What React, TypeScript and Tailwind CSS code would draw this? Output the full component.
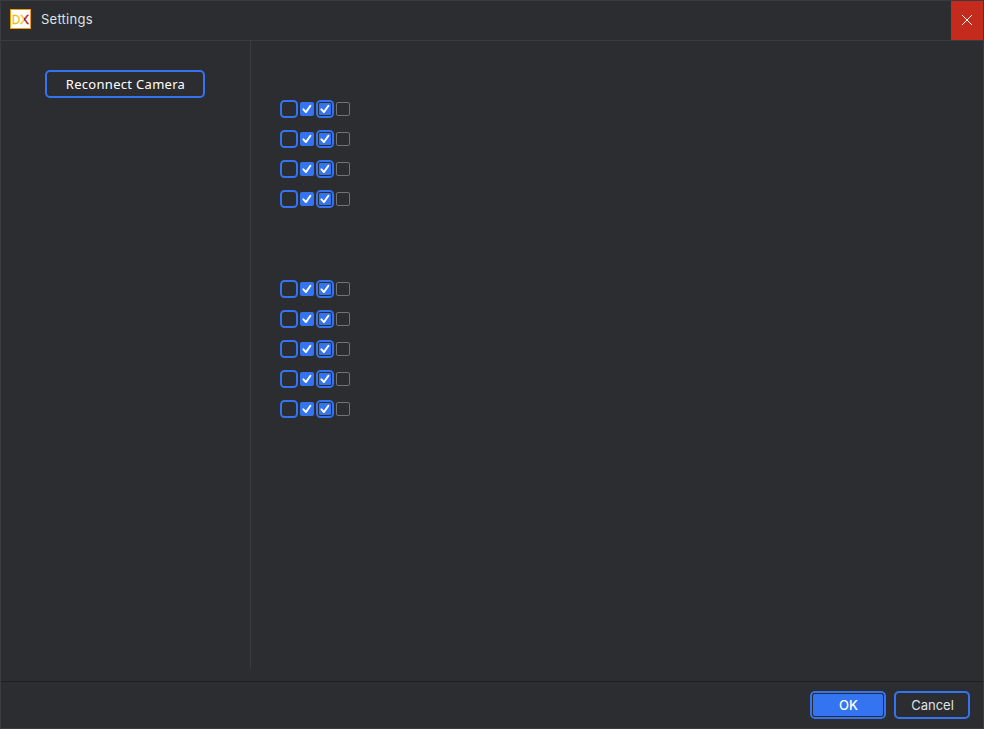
import React from "react";

function Tick() {
  return (
    <svg width="14" height="14" viewBox="0 0 14 14" fill="none" className="block">
      <path d="M3.4 7.3 5.9 10.1 10.4 3.7" stroke="#fff" strokeWidth="1.9" strokeLinecap="round" strokeLinejoin="round" />
    </svg>
  );
}

function CheckRow() {
  return (
    <div className="flex h-[18px] items-center gap-[2px]">
      <span className="size-[18px] rounded-[4.5px] border-2 border-[#3574f0]" />
      <span className="size-[14px] rounded-[2px] bg-[#3574f0]">
        <Tick />
      </span>
      <span className="size-[18px] rounded-[4.5px] border-2 border-[#3574f0] bg-[#2b2d30]">
        <span className="relative block size-[14px] rounded-[2px] border border-[#2b2d30] bg-[#3574f0]">
          <span className="absolute -top-px -left-px">
            <Tick />
          </span>
        </span>
      </span>
      <span className="size-[14px] rounded-[2px] border border-[#6f737a]" />
    </div>
  );
}

function CheckGroup({ rows }: { rows: number }) {
  return (
    <div className="flex flex-col gap-3">
      {Array.from({ length: rows }, (_, i) => (
        <CheckRow key={i} />
      ))}
    </div>
  );
}

function Logo() {
  return (
    <svg width="21" height="20" viewBox="0 0 21 20" className="block">
      <defs>
        <linearGradient id="cross" x1="0" x2="1" y1="0" y2="0">
          <stop offset="0.42" stopColor="#f0c018" />
          <stop offset="0.42" stopColor="#b5121b" />
        </linearGradient>
      </defs>
      <rect x="0.5" y="0.5" width="20" height="19" fill="#fff" stroke="#f59a0c" />
      <g fontFamily="'Open Sans', sans-serif" fontSize="12.5" strokeWidth="0.3">
        <text x="1.7" y="14.7" textLength="8.6" lengthAdjust="spacingAndGlyphs" fill="#eebc14" stroke="#eebc14">D</text>
        <text x="10.2" y="14.7" textLength="8.6" lengthAdjust="spacingAndGlyphs" fill="url(#cross)" stroke="url(#cross)">X</text>
      </g>
    </svg>
  );
}

export default function App() {
  return (
    <div className="flex h-[729px] w-[984px] flex-col border border-[#393b40] bg-[#2b2d30] font-['Inter',sans-serif] text-[13px] text-[#dfe1e5]">
      <header className="flex h-10 shrink-0 border-b border-[#393b40]">
        <div className="flex flex-1 items-start pt-2 pl-[9px]">
          <Logo />
          <h1 className="ml-[10px] leading-5 tracking-[0.25px]">Settings</h1>
        </div>
        <button className="flex w-8 items-center justify-center bg-[#c42b1c] pb-px">
          <svg width="12" height="12" viewBox="0 0 12 12" stroke="#fff" strokeWidth="1">
            <path d="M1 1 11 11M11 1 1 11" />
          </svg>
        </button>
      </header>
      <main className="flex h-[641px] shrink-0 border-b border-[#1e1f22]">
        <aside className="h-[628px] w-[250px] border-r border-[#393b40] pt-[29px] pl-11">
          <button className="flex h-7 w-40 items-center justify-center rounded-[5px] border-2 border-[#3574f0] pt-px pl-px font-['Noto_Sans',sans-serif] text-[13px] tracking-[0.3px] text-white">
            Reconnect Camera
          </button>
        </aside>
        <section className="flex flex-col gap-[72px] pt-[59px] pl-[29px]">
          <CheckGroup rows={4} />
          <CheckGroup rows={5} />
        </section>
      </main>
      <footer className="flex flex-1 items-start justify-end gap-2 pt-[9px] pr-[13px]">
        <button className="h-7 w-[76px] rounded-[5px] border-2 border-[#3574f0] bg-[#2b2d30]">
          <span className="flex h-6 items-center justify-center rounded-[3px] border border-[#2b2d30] bg-[#3574f0] pt-px pl-px font-medium text-white">
            OK
          </span>
        </button>
        <button className="h-7 w-[76px] rounded-[5px] border-2 border-[#3574f0] pt-px pl-px">Cancel</button>
      </footer>
    </div>
  );
}
